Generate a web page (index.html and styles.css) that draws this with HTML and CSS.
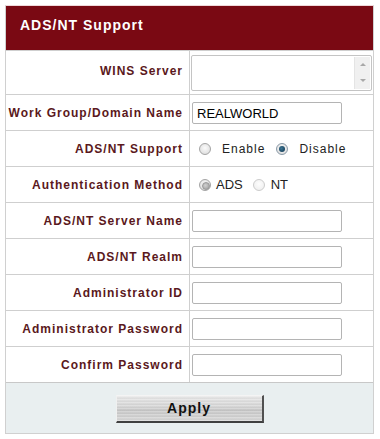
FILE: index.html
```html
<!DOCTYPE html>
<html>
<head>
<meta charset="utf-8">
<link rel="stylesheet" href="styles.css">
</head>
<body>
<div class="panel">
  <div class="head">ADS/NT Support</div>
  <div class="row tall">
    <div class="lab">WINS Server</div>
    <div class="val">
      <div class="tarea">
        <textarea class="tinput"></textarea>
        <div class="sbar"><span class="up"></span><span class="down"></span></div>
      </div>
    </div>
  </div>
  <div class="row">
    <div class="lab">Work Group/Domain Name</div>
    <div class="val"><input class="txt" type="text" value="REALWORLD"></div>
  </div>
  <div class="row">
    <div class="lab">ADS/NT Support</div>
    <div class="val radios spaced">
      <span class="radio"></span><span class="opt">Enable</span>
      <span class="radio on"></span><span class="opt">Disable</span>
    </div>
  </div>
  <div class="row">
    <div class="lab">Authentication Method</div>
    <div class="val radios plain">
      <span class="radio dim"></span><span class="opt">ADS</span>
      <span class="radio pale"></span><span class="opt">NT</span>
    </div>
  </div>
  <div class="row">
    <div class="lab">ADS/NT Server Name</div>
    <div class="val"><input class="txt" type="text"></div>
  </div>
  <div class="row">
    <div class="lab">ADS/NT Realm</div>
    <div class="val"><input class="txt" type="text"></div>
  </div>
  <div class="row">
    <div class="lab">Administrator ID</div>
    <div class="val"><input class="txt" type="text"></div>
  </div>
  <div class="row">
    <div class="lab">Administrator Password</div>
    <div class="val"><input class="txt" type="password"></div>
  </div>
  <div class="row">
    <div class="lab">Confirm Password</div>
    <div class="val"><input class="txt" type="password"></div>
  </div>
  <div class="foot">
    <button class="apply">Apply</button>
  </div>
</div>
</body>
</html>
```

FILE: styles.css
```css
* { box-sizing: border-box; }
body {
  margin: 0;
  background: #ffffff;
  font-family: "Liberation Sans", Arial, sans-serif;
}
.panel {
  margin: 5px 0 0 5px;
  width: 369px;
  border: 1px solid #d0d0d0;
  border-top-color: #f0d8da;
}
.head {
  height: 44px;
  background: #7a0913;
  color: #ffffff;
  font-weight: bold;
  font-size: 14px;
  letter-spacing: 1px;
  padding: 0 0 7px 14px;
  display: flex;
  align-items: center;
}
.row {
  display: grid;
  grid-template-columns: 184px 1fr;
  height: 36px;
  border-top: 1px solid #cfcfcf;
}
.row.tall { height: 44px; }
.lab {
  border-right: 1px solid #cfcfcf;
  display: flex;
  align-items: center;
  justify-content: flex-end;
  padding-right: 6px;
  font-weight: bold;
  font-size: 12px;
  letter-spacing: 1px;
  color: #5a1820;
  white-space: nowrap;
}
.row.tall .lab { padding-bottom: 4px; }
.val {
  display: flex;
  align-items: center;
  padding-left: 2px;
}
.row.tall .val { padding-left: 1px; }
.txt {
  width: 150px;
  height: 22px;
  border: 1px solid #b4b4b4;
  border-radius: 2px;
  padding: 1px 4px 0;
  font-family: "Liberation Sans", Arial, sans-serif;
  font-size: 13px;
  color: #000;
  outline: none;
  background: #fff;
}
.tarea {
  width: 181px;
  height: 36px;
  border: 1px solid #c4c4c4;
  border-radius: 2px;
  display: flex;
  background: #fff;
}
.tinput {
  flex: 1;
  border: none;
  resize: none;
  outline: none;
  background: transparent;
  overflow: hidden;
}
.sbar {
  width: 16px;
  margin: 1px;
  background: #f0f0f0;
  border-left: 1px solid #e4e4e4;
  display: flex;
  flex-direction: column;
  justify-content: space-between;
  align-items: center;
  padding: 6px 0 7px;
}
.up, .down {
  width: 0;
  height: 0;
  border-left: 3px solid transparent;
  border-right: 3px solid transparent;
}
.up { border-bottom: 3px solid #a8a8a8; }
.down { border-top: 3px solid #a8a8a8; }
.radios {
  padding-left: 9px;
  color: #222;
}
.radio {
  width: 12px;
  height: 12px;
  flex: none;
  border-radius: 50%;
  border: 1px solid #a4a4a4;
  background: radial-gradient(circle at 50% 40%, #fbfbfb 0%, #e2e2e2 70%, #cfcfcf 100%);
  display: inline-block;
  position: relative;
}
.radio.on::after, .radio.dim::after {
  content: "";
  position: absolute;
  left: 2px;
  top: 2px;
  width: 6px;
  height: 6px;
  border-radius: 50%;
}
.radio.on { border-color: #8a9aa8; }
.radio.on::after { background: radial-gradient(circle at 40% 40%, #3c7594 0%, #17405a 80%); }
.radio.dim::after { background: radial-gradient(circle at 40% 40%, #d0d0d0 0%, #a6a6a6 80%); border: 1px solid #999; }
.radio.pale { border-color: #cccccc; background: radial-gradient(circle at 50% 40%, #fdfdfd 0%, #efefef 80%); }
.spaced .opt {
  font-size: 12px;
  letter-spacing: 1px;
  margin: 0 11px 0 11px;
}
.plain .opt {
  font-size: 13px;
  margin: 0 10px 0 5px;
}
.plain .opt:last-child { margin-left: 6px; }
.foot {
  height: 51px;
  border-top: 1px solid #c8c8c8;
  background: #e9eff0;
  display: flex;
  align-items: center;
  justify-content: center;
}
.apply {
  width: 148px;
  height: 28px;
  margin-top: 1px;
  font-family: "Liberation Sans", Arial, sans-serif;
  font-weight: bold;
  font-size: 14px;
  letter-spacing: 1px;
  color: #111;
  border: 1px solid;
  border-color: #f4f4f4 #505050 #404040 #f0f0f0;
  border-bottom-width: 2px;
  border-right-width: 2px;
  background:
    repeating-linear-gradient(180deg, rgba(255,255,255,0.25) 0px, rgba(255,255,255,0.25) 1px, rgba(0,0,0,0.04) 2px, rgba(0,0,0,0) 3px),
    linear-gradient(180deg, #e6e6e6 0%, #d2d2d2 45%, #c4c4c4 55%, #d6d6d6 100%);
  padding: 0;
}
```
